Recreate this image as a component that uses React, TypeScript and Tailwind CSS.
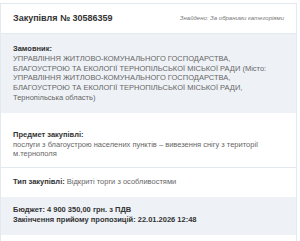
export default function App() {
  return (
    <div className="w-[300px] h-[241px] overflow-hidden bg-white pt-[3px] font-['Liberation_Sans',Arial,sans-serif]">
      <div className="w-[297px] border border-[#e4e9ef] text-[7.5px] leading-[9.8px] text-[#333]">
        <div className="flex h-[30px] items-center justify-between border-b border-[#e4e9ef] px-3">
          <span className="text-[9px] font-bold text-[#333]">Закупівля № 30586359</span>
          <span className="text-[6px] italic text-[#777]">Знайдено: За обраними категоріями</span>
        </div>

        <div className="bg-[#eef2f6] px-3 py-[10px]">
          <div className="font-bold">Замовник:</div>
          <div className="text-[#666]">
            УПРАВЛІННЯ ЖИТЛОВО-КОМУНАЛЬНОГО ГОСПОДАРСТВА, БЛАГОУСТРОЮ ТА ЕКОЛОГІЇ ТЕРНОПІЛЬСЬКОЇ
            МІСЬКОЇ РАДИ (Місто: УПРАВЛІННЯ ЖИТЛОВО-КОМУНАЛЬНОГО ГОСПОДАРСТВА, БЛАГОУСТРОЮ ТА ЕКОЛОГІЇ
            ТЕРНОПІЛЬСЬКОЇ МІСЬКОЇ РАДИ, Тернопільська область)
          </div>
        </div>

        <div className="border-b border-[#e4e9ef] px-3 pt-[17px] pb-[8px]">
          <div className="font-bold">Предмет закупівлі:</div>
          <div className="text-[#666]">
            послуги з благоустрою населених пунктів – вивезення снігу з території м.тернополя
          </div>
        </div>

        <div className="px-3 pt-[9px] pb-[10px]">
          <span className="font-bold">Тип закупівлі:</span>{' '}
          <span className="text-[#666]">Відкриті торги з особливостями</span>
        </div>

        <div className="bg-[#eef2f6] px-3 pt-[8px] pb-[10px] font-bold">
          <div>Бюджет: 4 900 350,00 грн. з ПДВ</div>
          <div>Закінчення прийому пропозицій: 22.01.2026 12:48</div>
        </div>
        <div className="h-[6px]" />
      </div>
    </div>
  );
}
